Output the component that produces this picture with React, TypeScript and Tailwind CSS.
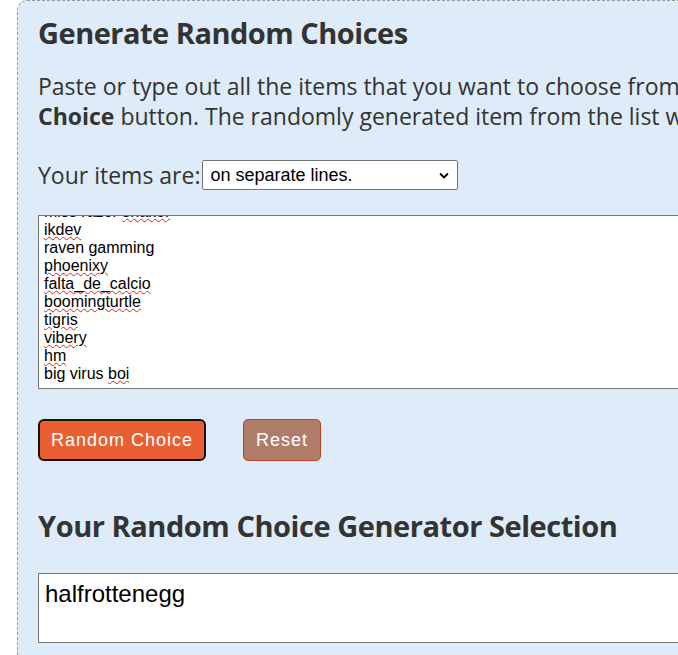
import React from "react";

const items = [
  { parts: [{ t: "miss razor " }, { t: "shaker", bad: true }] },
  { parts: [{ t: "ikdev", bad: true }] },
  { parts: [{ t: "raven gamming" }] },
  { parts: [{ t: "phoenixy", bad: true }] },
  { parts: [{ t: "falta_de_calcio", bad: true }] },
  { parts: [{ t: "boomingturtle", bad: true }] },
  { parts: [{ t: "tigris", bad: true }] },
  { parts: [{ t: "vibery", bad: true }] },
  { parts: [{ t: "hm", bad: true }] },
  { parts: [{ t: "big virus " }, { t: "boi", bad: true }] },
];

export default function App() {
  return (
    <div className="w-[678px] h-[655px] overflow-hidden bg-white font-['Open_Sans',sans-serif] text-[#333]">
      <div className="ml-[17px] w-[760px] h-[700px] bg-[#deebf8] border-l border-t border-dashed border-[#9a9a9a] rounded-tl-[10px] pl-[20px] pt-[14px]">
        <h1 className="text-[29px] font-bold leading-[36px] tracking-[-0.5px]">Generate Random Choices</h1>

        <p className="mt-[20px] text-[23px] leading-[30px] whitespace-nowrap">
          Paste or type out all the items that you want to choose from the list, then click the Random
          <br />
          <b>Choice</b> button. The randomly generated item from the list will appear below.
        </p>

        <div className="mt-[29px] flex items-center">
          <span className="text-[23px] leading-[30px]">Your items are:</span>
          <div className="ml-[2px] w-[256px] h-[30px] bg-white border border-[#767676] rounded-[2px] flex items-center justify-between pl-[7px] pr-[8px] font-['Liberation_Sans',sans-serif] text-[18px] text-black">
            <span>on separate lines.</span>
            <svg width="10" height="7" viewBox="0 0 10 7">
              <path d="M1 1.5 L5 5.5 L9 1.5" fill="none" stroke="#000" strokeWidth="1.8" />
            </svg>
          </div>
        </div>

        <div className="mt-[25px] h-[174px] bg-white border border-[#767676] overflow-hidden font-['Liberation_Sans',sans-serif] text-[16px] leading-[18px] text-black pl-[5px]">
          <div className="-mt-[13px]">
            {items.map((it, i) => (
              <div key={i}>
                {it.parts.map((p, j) => (
                  <span
                    key={j}
                    className={p.bad ? "underline decoration-wavy decoration-[#e02020] decoration-1 underline-offset-[1px]" : ""}
                  >
                    {p.t}
                  </span>
                ))}
              </div>
            ))}
          </div>
        </div>

        <div className="mt-[30px] flex items-center gap-[37px] font-['Liberation_Sans',sans-serif] text-[18px] text-white tracking-[1px]">
          <button className="w-[168px] h-[42px] bg-[#e95f32] border-2 border-[#111] rounded-[6px]">Random Choice</button>
          <button className="w-[78px] h-[42px] bg-[#b07c6a] border border-[#c0421d] rounded-[5px]">Reset</button>
        </div>

        <h2 className="mt-[47px] text-[29px] font-bold leading-[36px] tracking-[-0.45px]">
          Your Random Choice Generator Selection
        </h2>

        <div className="mt-[29px] h-[70px] bg-white border border-[#767676] pl-[6px] pt-[6px] font-['Liberation_Sans',sans-serif] text-[24px] leading-[28px] text-black">
          halfrottenegg
        </div>
      </div>
    </div>
  );
}
